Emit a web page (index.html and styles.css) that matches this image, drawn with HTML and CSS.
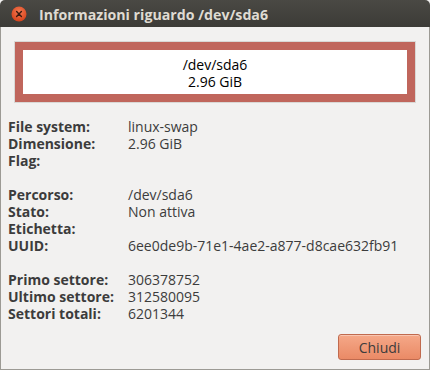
FILE: index.html
```html
<!DOCTYPE html>
<html>
<head>
<meta charset="utf-8">
<link rel="stylesheet" href="styles.css">
</head>
<body>
<div class="window">
  <div class="titlebar">
    <svg class="close" width="16" height="16" viewBox="0 0 16 16">
      <defs>
        <radialGradient id="cg" cx="50%" cy="35%" r="60%">
          <stop offset="0" stop-color="#f47a52"/>
          <stop offset="1" stop-color="#d8461f"/>
        </radialGradient>
      </defs>
      <circle cx="8" cy="8" r="7.5" fill="url(#cg)"/>
      <path d="M5.6 5.6 L10.4 10.4 M10.4 5.6 L5.6 10.4" stroke="#3a1a10" stroke-width="1.4" stroke-linecap="round"/>
    </svg>
    <span class="title">Informazioni riguardo /dev/sda6</span>
  </div>
  <div class="content">
    <div class="part-frame">
      <div class="part">
        <div class="part-inner">
          <div>/dev/sda6</div>
          <div>2.96 GiB</div>
        </div>
      </div>
    </div>
    <div class="info">
      <div class="label">File system:</div><div class="value">linux-swap</div>
      <div class="label">Dimensione:</div><div class="value">2.96 GiB</div>
      <div class="label">Flag:</div><div class="value"></div>
      <div class="gap"></div>
      <div class="label">Percorso:</div><div class="value">/dev/sda6</div>
      <div class="label">Stato:</div><div class="value">Non attiva</div>
      <div class="label">Etichetta:</div><div class="value"></div>
      <div class="label">UUID:</div><div class="value">6ee0de9b-71e1-4ae2-a877-d8cae632fb91</div>
      <div class="gap"></div>
      <div class="label">Primo settore:</div><div class="value">306378752</div>
      <div class="label">Ultimo settore:</div><div class="value">312580095</div>
      <div class="label">Settori totali:</div><div class="value">6201344</div>
    </div>
    <div class="actions">
      <button class="btn">Chiudi</button>
    </div>
  </div>
</div>
</body>
</html>
```

FILE: styles.css
```css
html, body {
  margin: 0;
  padding: 0;
  background: #f2f1f0;
}
.window {
  width: 430px;
  height: 370px;
  box-sizing: border-box;
  display: flex;
  flex-direction: column;
  font-family: "Open Sans", "DejaVu Sans", sans-serif;
  font-size: 14px;
  color: #3c3c3c;
  background: #f2f1f0;
}
.titlebar {
  height: 27px;
  flex: none;
  display: flex;
  align-items: center;
  gap: 12px;
  padding-left: 11px;
  background: linear-gradient(#4a4944, #3c3b37);
  border-radius: 5px 5px 0 0;
  box-sizing: border-box;
}
.close {
  flex: none;
  margin-top: 1px;
}
.title {
  color: #dfdbd2;
  font-weight: bold;
  font-size: 14.2px;
  margin-top: 1px;
}
.content {
  flex: 1;
  display: flex;
  flex-direction: column;
  border-left: 1px solid #9c9a94;
  border-right: 1px solid #9c9a94;
  border-bottom: 1px solid #9c9a94;
  padding: 14px 13px 0 7px;
}
.part-frame {
  margin-left: 6px;
  width: 402px;
  height: 62px;
  box-sizing: border-box;
  border: 1px solid #d9d8d5;
}
.part {
  height: 100%;
  box-sizing: border-box;
  background: #c0665c;
  padding: 8px;
}
.part-inner {
  height: 100%;
  background: #ffffff;
  color: #000;
  display: flex;
  flex-direction: column;
  justify-content: center;
  align-items: center;
  line-height: 17px;
  padding-top: 1px;
  box-sizing: border-box;
}
.info {
  margin-top: 15px;
  display: grid;
  grid-template-columns: 120px 1fr;
  grid-auto-rows: 17px;
  line-height: 17px;
}
.label {
  font-weight: bold;
}
.gap {
  grid-column: 1 / 3;
}
.actions {
  margin-top: auto;
  display: flex;
  justify-content: flex-end;
  padding-bottom: 9px;
}
.btn {
  width: 83px;
  height: 26px;
  margin-right: -5px;
  border: 1px solid #c06a4e;
  border-radius: 3px;
  background: linear-gradient(#f5a888, #ea8a66);
  color: #3c3c3c;
  font-family: "Open Sans", "DejaVu Sans", sans-serif;
  font-size: 14px;
  padding: 0;
  box-shadow: inset 0 1px 0 rgba(255,255,255,0.35);
}
```
